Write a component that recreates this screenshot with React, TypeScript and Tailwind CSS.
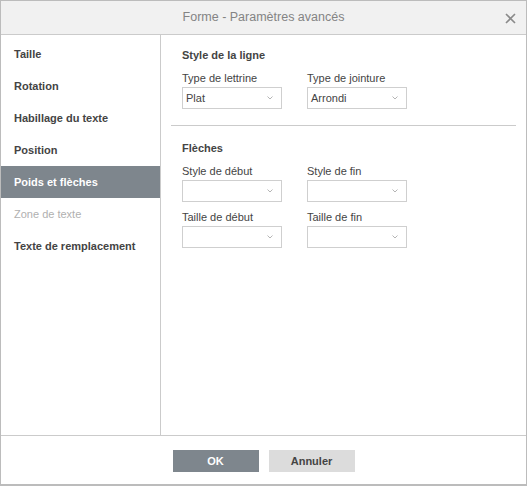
import React from "react";

const Chevron = () => (
  <svg width="6" height="4" viewBox="0 0 6 4" className="shrink-0">
    <path d="M0.5 0.5 L3 3 L5.5 0.5" fill="none" stroke="#b5b5b5" strokeWidth="1" />
  </svg>
);

const Select = ({ value }: { value?: string }) => (
  <div className="flex h-[22px] w-[100px] items-center justify-between border border-[#cfcfcf] bg-white pl-[3px] pr-[8px] text-[11px] text-[#444]">
    <span>{value ?? ""}</span>
    <Chevron />
  </div>
);

const Field = ({ label, value }: { label: string; value?: string }) => (
  <div className="flex w-[100px] flex-col">
    <div className="mb-[2px] h-[13px] text-[11px] leading-[13px] text-[#444]">{label}</div>
    <Select value={value} />
  </div>
);

const items = [
  { t: "Taille" },
  { t: "Rotation" },
  { t: "Habillage du texte" },
  { t: "Position" },
  { t: "Poids et flèches", sel: true },
  { t: "Zone de texte", dis: true },
  { t: "Texte de remplacement" },
];

export default function App() {
  return (
    <div
      className="h-[487px] w-[528px] bg-white"
      style={{ fontFamily: '"Liberation Sans", Arial, sans-serif' }}
    >
      <div className="flex h-[486px] w-[527px] flex-col border border-b-[2px] border-[#bcbcbc] bg-white">
        <div className="relative flex h-[34px] shrink-0 items-center justify-center border-b border-[#cbcbcb] bg-[#f1f1f1]">
          <span className="text-[12.5px] text-[#848484]">Forme - Paramètres avancés</span>
          <svg className="absolute right-[10px] top-[12px]" width="11" height="11" viewBox="0 0 11 11">
            <path d="M1 1 L10 10 M10 1 L1 10" stroke="#8a8a8a" strokeWidth="1.6" />
          </svg>
        </div>
        <div className="flex min-h-0 flex-1">
          <div className="w-[160px] shrink-0 border-r border-[#cbcbcb] pt-[3px]">
            {items.map((it) => (
              <div
                key={it.t}
                className={
                  "flex h-[32px] items-center pl-[13px] text-[11px] font-bold " +
                  (it.sel
                    ? "bg-[#7e868d] text-white"
                    : it.dis
                    ? "font-normal text-[#b0b0b0]"
                    : "text-[#444]")
                }
              >
                {it.t}
              </div>
            ))}
          </div>
          <div className="flex-1 px-[10px] pt-[14px]">
            <div className="pl-[11px]">
              <div className="mb-[10px] text-[11px] font-bold leading-[13px] text-[#444]">Style de la ligne</div>
              <div className="flex gap-[25px]">
                <Field label="Type de lettrine" value="Plat" />
                <Field label="Type de jointure" value="Arrondi" />
              </div>
            </div>
            <div className="mb-[16px] mt-[16px] h-px bg-[#cbcbcb]" />
            <div className="pl-[11px]">
              <div className="mb-[10px] text-[11px] font-bold leading-[13px] text-[#444]">Flèches</div>
              <div className="flex gap-[25px]">
                <Field label="Style de début" />
                <Field label="Style de fin" />
              </div>
              <div className="mt-[9px] flex gap-[25px]">
                <Field label="Taille de début" />
                <Field label="Taille de fin" />
              </div>
            </div>
          </div>
        </div>
        <div className="flex h-[49px] shrink-0 items-start justify-center gap-[10px] border-t border-[#cbcbcb] pt-[14px]">
          <button className="h-[22px] w-[86px] bg-[#7e868d] text-[11px] font-bold text-white">OK</button>
          <button className="h-[22px] w-[86px] bg-[#dcdcdc] text-[11px] font-bold text-[#444]">Annuler</button>
        </div>
      </div>
    </div>
  );
}
